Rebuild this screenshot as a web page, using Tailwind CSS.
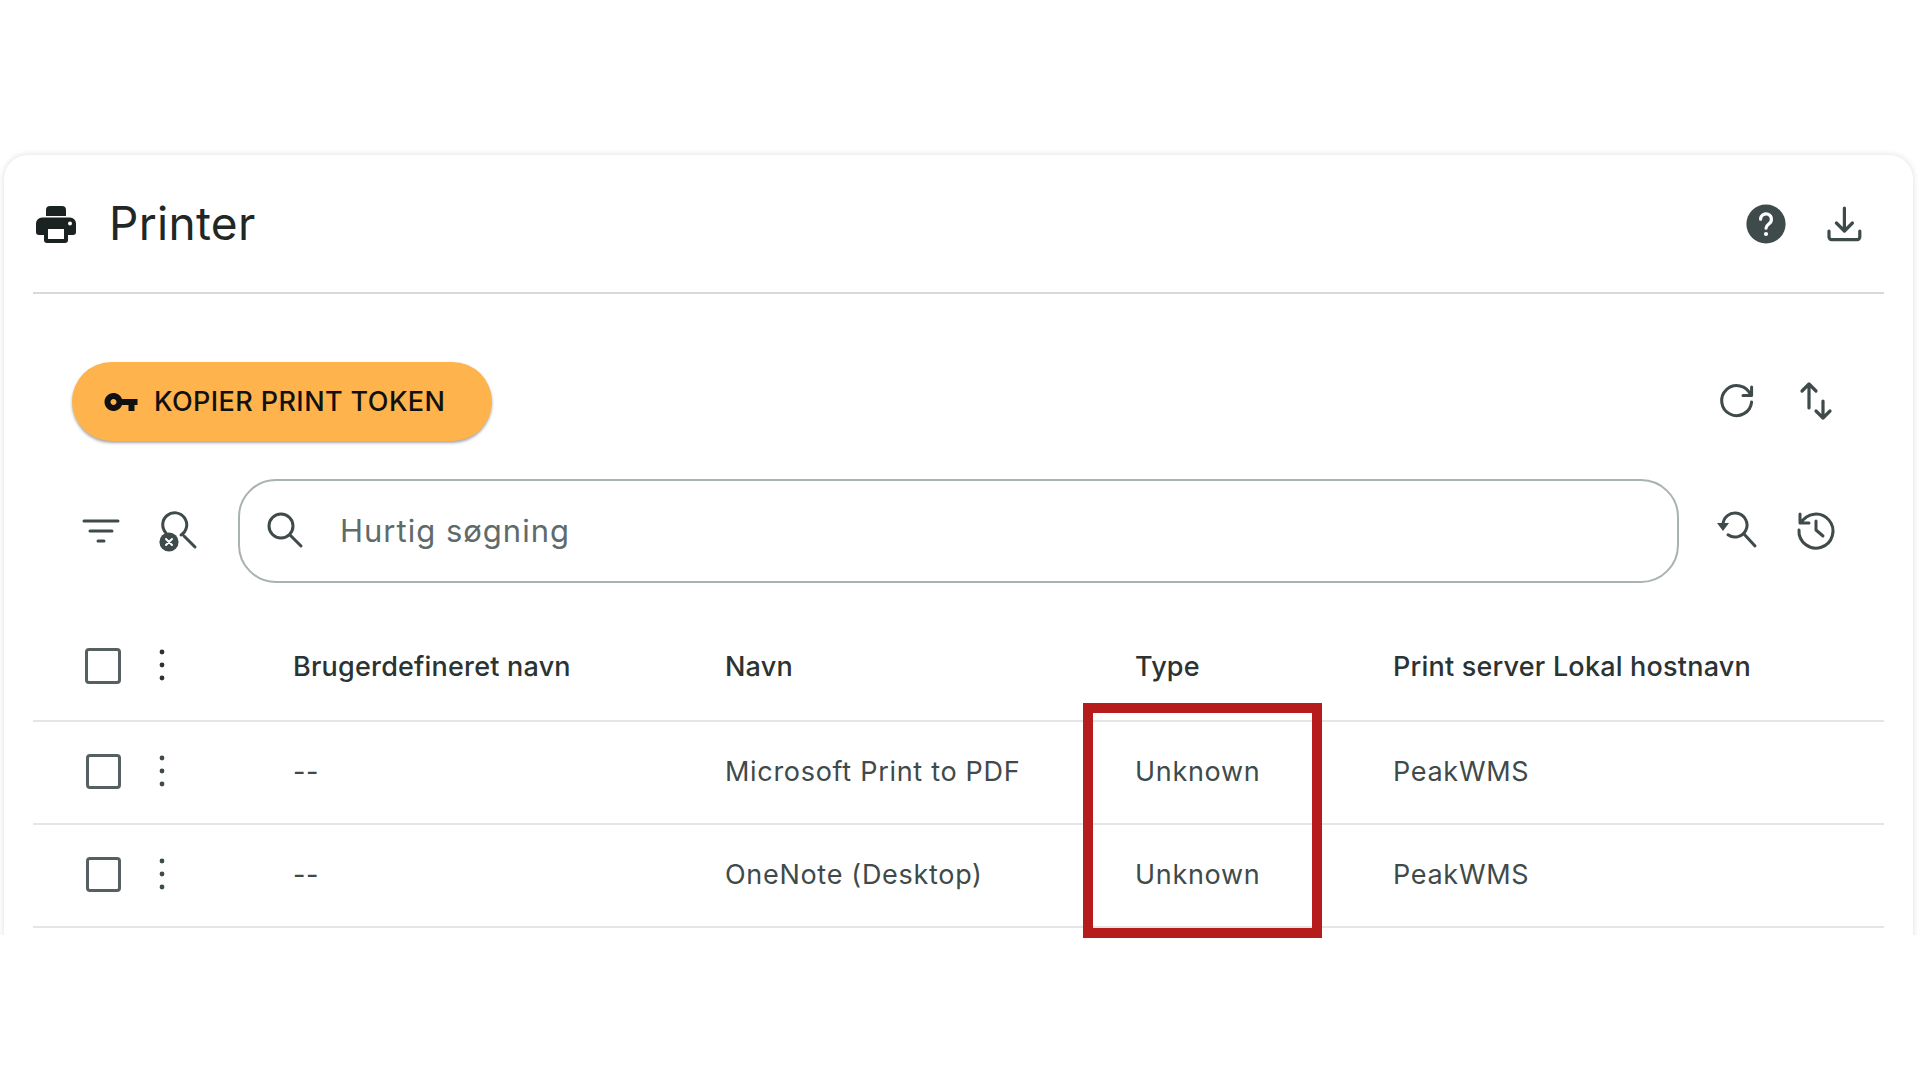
<!DOCTYPE html>
<html lang="en">

<head>
  <meta charset="UTF-8" />
  <title>Printer</title>
  <script src="https://cdn.jsdelivr.net/npm/@tailwindcss/browser@4"></script>
</head>

<body class="bg-white font-['Inter',sans-serif] text-[#3f4a4a]">
  <div class="relative w-[1920px] h-[1080px] overflow-hidden bg-white">
    <!-- Card, cut off at the bottom as in the picture -->
    <div class="h-[935px] pt-[155px] px-1 overflow-hidden">
      <div class="h-[800px] w-[1909px] px-[29px] bg-white rounded-t-[24px] shadow-[0_0_6px_rgba(0,0,0,0.14)]">

        <!-- Header -->
        <header class="flex items-center justify-between h-[139px] border-b-2 border-[#d5dada]">
          <div class="flex items-center">
            <svg class="w-12 h-12 -ml-px text-[#1b2222]" viewBox="0 0 24 24" fill="currentColor">
              <path d="M17 8H7V5a2 2 0 0 1 2-2h6a2 2 0 0 1 2 2v3zM5 8.800h14a3 3 0 0 1 3 3V16a1.500 1.500 0 0 1-1.500 1.500H18V20a1.500 1.500 0 0 1-1.500 1.500h-9A1.500 1.500 0 0 1 6 20v-2.500H3.500A1.500 1.500 0 0 1 2 16v-4.200a3 3 0 0 1 3-3zM8 14.500V19.500h8V14.500H8zM19 10.800a1 1 0 1 0 0 2 1 1 0 0 0 0-2z" fill-rule="evenodd" />
            </svg>
            <h1 class="ml-[29px] -mt-0.5 text-[46px] leading-none tracking-[0.3px] text-[#1f2727]">Printer</h1>
          </div>
          <div class="flex items-center gap-[30px] pr-4">
            <svg class="w-12 h-12" viewBox="0 0 24 24">
              <circle cx="12" cy="12" r="9.800" fill="#3f4a4a" />
              <path d="M9.300 9.600a2.700 2.700 0 1 1 4.300 2.200c-.9.700-1.600 1.200-1.600 2.300" fill="none" stroke="#fff" stroke-width="1.600" stroke-linecap="round" />
              <circle cx="12" cy="17" r="1.050" fill="#fff" />
            </svg>
            <svg class="w-12 h-12" viewBox="0 0 24 24" fill="none" stroke="currentColor" stroke-width="1.600" stroke-linecap="round" stroke-linejoin="round">
              <path d="M12.200 4v11M8.200 11.500l4 4 4-4M4.500 15.500v3a1.300 1.300 0 0 0 1.300 1.300h12.800a1.300 1.300 0 0 0 1.300-1.300v-3" />
            </svg>
          </div>
        </header>

        <!-- Toolbar -->
        <div class="flex items-center justify-between mt-[68px] pl-[39px] pr-[44px]">
          <button class="flex items-center h-[79px] w-[420px] pl-[31px] rounded-full bg-[#ffb34c] text-[#111] shadow-[0_2px_3px_rgba(0,0,0,0.35)]">
            <svg class="w-9 h-9 shrink-0" viewBox="0 0 24 24" fill="currentColor">
              <path d="M12.650 10C11.830 7.670 9.610 6 7 6c-3.310 0-6 2.690-6 6s2.690 6 6 6c2.610 0 4.830-1.670 5.650-4H17v4h4v-4h2v-4H12.650zM7 14c-1.100 0-2-.9-2-2s.9-2 2-2 2 .9 2 2-.9 2-2 2z" />
            </svg>
            <span class="ml-[15px] mt-0.5 text-[27px] tracking-[0.4px] font-medium whitespace-nowrap">KOPIER PRINT TOKEN</span>
          </button>
          <div class="flex items-center gap-[30px]">
            <svg class="w-12 h-12" viewBox="0 0 24 24" fill="none" stroke="currentColor" stroke-width="1.500" stroke-linecap="round" stroke-linejoin="round">
              <path d="M18.300 8.500A7.500 7.500 0 1 0 18.800 12M18.800 4.500v4.300h-4.300" />
            </svg>
            <svg class="w-12 h-12" viewBox="0 0 24 24" fill="none" stroke="currentColor" stroke-width="1.600" stroke-linecap="round" stroke-linejoin="round">
              <path d="M8.500 3v12M5 6.500L8.500 3 12 6.500M15.500 11.500v8.500M12 16.500l3.500 3.500 3.500-3.500" />
            </svg>
          </div>
        </div>

        <!-- Search row -->
        <div class="flex items-center mt-[38px] pl-[44px] pr-[44px]">
          <div class="flex items-center gap-7">
            <svg class="w-12 h-12" viewBox="0 0 24 24" fill="none" stroke="currentColor" stroke-width="1.500" stroke-linecap="round">
              <path d="M3.500 7h17M6.500 12h11M10.500 17h3" />
            </svg>
            <svg class="w-12 h-12" viewBox="0 0 24 24" fill="none" stroke="currentColor" stroke-width="1.500" stroke-linecap="round">
              <path d="M6.500 13a6 6 0 1 1 7.500 1M15.500 14.500l5.500 5.500" />
              <circle cx="8" cy="17.500" r="4.800" fill="currentColor" stroke="none" />
              <path d="M6.500 16l3 3M9.500 16l-3 3" stroke="#fff" stroke-width="1" />
            </svg>
          </div>
          <div class="flex items-center flex-1 h-[104px] ml-[37px] pl-[23px] rounded-[38px] border-2 border-[#a9b1b1]">
            <svg class="w-12 h-12 shrink-0" viewBox="0 0 24 24" fill="none" stroke="currentColor" stroke-width="1.500" stroke-linecap="round">
              <circle cx="9" cy="9.500" r="6" />
              <path d="M13.500 14l5.500 5.500" />
            </svg>
            <span class="ml-[29px] text-[31px] tracking-[1px] text-[#5f6b6b]">Hurtig søgning</span>
          </div>
          <div class="flex items-center gap-[30px] ml-[35px]">
            <svg class="w-12 h-12 -mt-1" viewBox="0 0 24 24" fill="none" stroke="currentColor" stroke-width="1.500" stroke-linecap="round" stroke-linejoin="round">
              <path d="M4.500 10a6 6 0 1 1 2.500 4.900M15 14.500l5.500 6" />
              <path d="M1.500 9h6L4.500 13z" fill="currentColor" stroke="none" />
            </svg>
            <svg class="w-12 h-12 -mt-0.5" viewBox="0 0 24 24" fill="none" stroke="currentColor" stroke-width="1.500" stroke-linecap="round" stroke-linejoin="round">
              <path d="M4.500 8.500A8.500 8.500 0 1 1 3.500 12M4 4v4.500h4.500M12 7.500V12l3.500 3" />
            </svg>
          </div>
        </div>

        <!-- Table -->
        <div class="mt-[28px]">
          <div class="grid grid-cols-[260px_432px_410px_258px_1fr] items-center h-[111px] pt-[3px] border-b-2 border-[#e4e6e6] text-[27px] tracking-[0.2px] font-medium text-[#2b3333]">
            <div class="flex items-center pl-[52px] -mt-[3px]">
              <div class="w-9 h-9 rounded-[4px] border-[3px] border-[#566060]"></div>
              <svg class="w-12 h-12 ml-[17px] -mt-0.5" viewBox="0 0 24 24" fill="currentColor">
                <circle cx="12" cy="5.500" r="1.200" /><circle cx="12" cy="12" r="1.200" /><circle cx="12" cy="18.500" r="1.200" />
              </svg>
            </div>
            <div>Brugerdefineret navn</div>
            <div>Navn</div>
            <div>Type</div>
            <div class="whitespace-nowrap">Print server Lokal hostnavn</div>
          </div>
          <div class="grid grid-cols-[260px_432px_410px_258px_1fr] items-center h-[103px] border-b-2 border-[#e4e6e6] text-[27px] tracking-[0.7px]">
            <div class="flex items-center pl-[53px] -mt-0.5">
              <div class="w-[35px] h-[35px] rounded-[4px] border-[3px] border-[#566060]"></div>
              <svg class="w-12 h-12 ml-[17px] -mt-0.5" viewBox="0 0 24 24" fill="currentColor">
                <circle cx="12" cy="5.500" r="1.200" /><circle cx="12" cy="12" r="1.200" /><circle cx="12" cy="18.500" r="1.200" />
              </svg>
            </div>
            <div>--</div>
            <div>Microsoft Print to PDF</div>
            <div>Unknown</div>
            <div>PeakWMS</div>
          </div>
          <div class="grid grid-cols-[260px_432px_410px_258px_1fr] items-center h-[103px] border-b-2 border-[#e4e6e6] text-[27px] tracking-[0.7px]">
            <div class="flex items-center pl-[53px] -mt-0.5">
              <div class="w-[35px] h-[35px] rounded-[4px] border-[3px] border-[#566060]"></div>
              <svg class="w-12 h-12 ml-[17px] -mt-0.5" viewBox="0 0 24 24" fill="currentColor">
                <circle cx="12" cy="5.500" r="1.200" /><circle cx="12" cy="12" r="1.200" /><circle cx="12" cy="18.500" r="1.200" />
              </svg>
            </div>
            <div>--</div>
            <div>OneNote (Desktop)</div>
            <div>Unknown</div>
            <div>PeakWMS</div>
          </div>
        </div>
      </div>
    </div>

    <!-- Red highlight over the Type column -->
    <div class="absolute left-[1083px] top-[703px] w-[239px] h-[235px] border-[10px] border-[#b71c1c]"></div>
  </div>
</body>

</html>
